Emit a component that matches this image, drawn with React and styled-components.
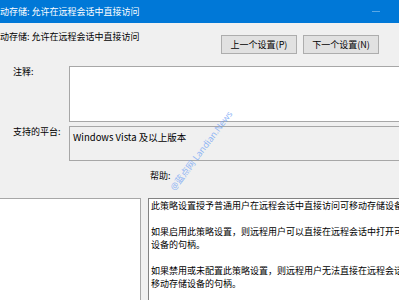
import React from 'react'
import styled, { createGlobalStyle } from 'styled-components'

const GlobalStyle = createGlobalStyle`
  html, body {
    margin: 0;
    padding: 0;
    background: #f0f0f0;
    overflow: hidden;
  }
  body {
    font-family: "Noto Sans CJK SC", "Noto Sans", sans-serif;
    font-size: 9px;
    color: #000;
  }
`

const Window = styled.div`
  position: relative;
  width: 399px;
  height: 300px;
  overflow: hidden;
  background: #f0f0f0;
`

const TitleBar = styled.div`
  height: 23px;
  background: #0078d7;
  color: #fff;
  display: flex;
  align-items: center;
  justify-content: space-between;
  line-height: 12px;
  padding-right: 19px;
`

const MinGlyph = styled.span`
  width: 8px;
  height: 1px;
  background: rgba(255, 255, 255, 0.35);
`

const Header = styled.div`
  display: flex;
  justify-content: space-between;
  align-items: flex-start;
  padding-right: 20px;
`

const Heading = styled.div`
  margin-top: 8px;
  line-height: 12px;
`

const ButtonRow = styled.div`
  display: flex;
  gap: 6px;
  margin-top: 12px;
`

const NavButton = styled.button`
  width: 76px;
  height: 19px;
  padding: 0;
  background: #e1e1e1;
  border: 1px solid #adadad;
  font-family: inherit;
  font-size: 9px;
  color: #000;
  line-height: 12px;
`

const FieldRow = styled.div`
  display: flex;
  align-items: flex-start;
  margin-top: ${p => p.$top}px;
`

const Label = styled.div`
  width: 56px;
  padding-left: 13px;
  line-height: 12px;
  flex-shrink: 0;
`

const Box = styled.div`
  flex: 1;
  height: ${p => p.$h}px;
  margin-right: -12px;
  background: ${p => (p.$white ? '#fff' : '#f0f0f0')};
  border: 1px solid #a7a7a7;
  box-sizing: border-box;
  padding: 4px 3px;
  line-height: 12px;
  font-size: 9.5px;
`

const HelpLabel = styled.div`
  margin: 9px 0 0 150px;
  line-height: 12px;
`

const Panels = styled.div`
  display: flex;
  gap: 7px;
  margin-top: 16px;
  margin-left: -4px;
  margin-right: -20px;
  height: 110px;
`

const OptionsPanel = styled.div`
  width: 145px;
  background: #fff;
  border: 1px solid #a7a7a7;
  box-sizing: border-box;
`

const HelpPanel = styled.div`
  flex: 1;
  background: #fff;
  border: 1px solid #828282;
  box-sizing: border-box;
  padding: 0 2px;
  line-height: 13px;
  white-space: nowrap;
  overflow: hidden;
`

const Para = styled.p`
  margin: 0 0 13px;
`

const Watermark = styled.div`
  position: absolute;
  left: 146px;
  top: 145px;
  width: 110px;
  text-align: center;
  transform: rotate(-53deg);
  color: rgba(110, 160, 245, 0.75);
  font-size: 9px;
  line-height: 11px;
  white-space: nowrap;
  font-family: "Noto Sans", "Noto Sans CJK SC", sans-serif;
`

export default function App() {
  return (
    <Window>
      <GlobalStyle />
      <TitleBar>
        <span>动存储: 允许在远程会话中直接访问</span>
        <MinGlyph />
      </TitleBar>
      <Header>
        <Heading>动存储: 允许在远程会话中直接访问</Heading>
        <ButtonRow>
          <NavButton>上一个设置(P)</NavButton>
          <NavButton>下一个设置(N)</NavButton>
        </ButtonRow>
      </Header>
      <FieldRow $top={12}>
        <Label>注释:</Label>
        <Box $h={56} $white />
      </FieldRow>
      <FieldRow $top={4}>
        <Label>支持的平台:</Label>
        <Box $h={35}>Windows Vista 及以上版本</Box>
      </FieldRow>
      <HelpLabel>帮助:</HelpLabel>
      <Panels>
        <OptionsPanel />
        <HelpPanel>
          <Para>此策略设置授予普通用户在远程会话中直接访问可移动存储设备的权限。</Para>
          <Para>如果启用此策略设置，则远程用户可以直接在远程会话中打开可移动存储<br />设备的句柄。</Para>
          <Para>如果禁用或未配置此策略设置，则远程用户无法直接在远程会话中打开可<br />移动存储设备的句柄。</Para>
        </HelpPanel>
      </Panels>
      <Watermark>@蓝点网 Landian.News</Watermark>
    </Window>
  )
}
